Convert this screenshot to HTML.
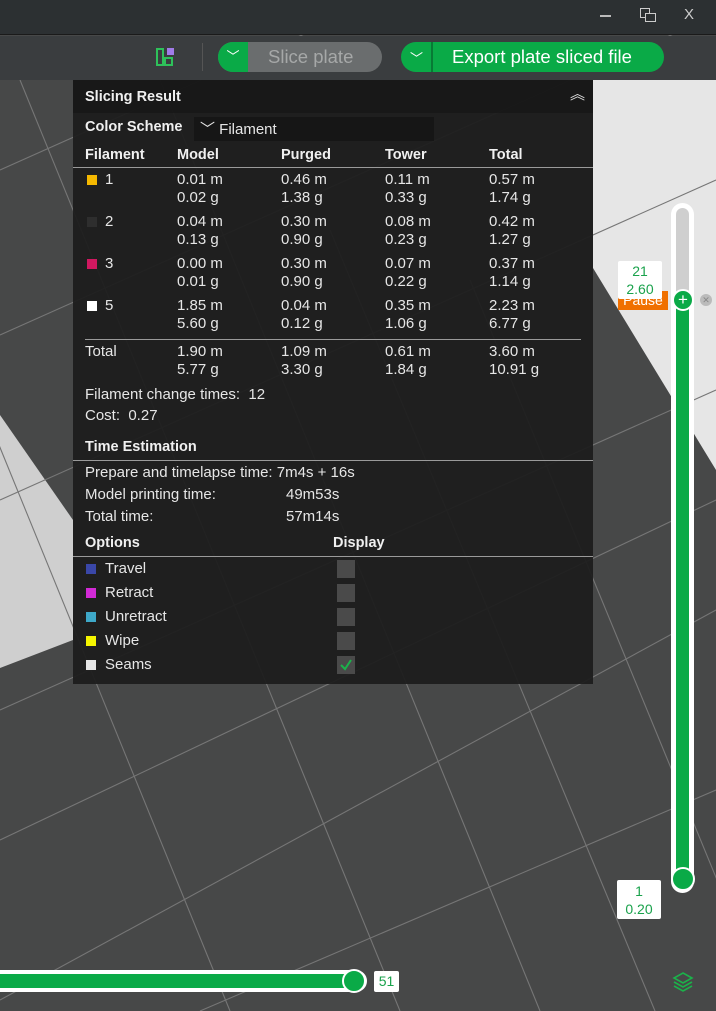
<!DOCTYPE html>
<html><head><meta charset="utf-8"><style>
*{margin:0;padding:0;box-sizing:border-box}
body{width:716px;height:1011px;overflow:hidden;background:#474848;font-family:"Liberation Sans","DejaVu Sans",sans-serif;position:relative}
.a{position:absolute;white-space:nowrap}
.t{color:#e6e6e6;font-size:15px;line-height:18px}
.b{font-weight:bold;color:#f0f0f0;font-size:14.5px}
.sw{position:absolute;width:10px;height:10px}
.cb{position:absolute;left:337px;width:18px;height:18px;background:#4a4a4a}
.ln{position:absolute;height:1px;background:#9a9a9a}
</style></head><body>
<svg class="a" style="left:0;top:0" width="716" height="1011">
<polygon points="593,80 716,80 716,470 593,268" fill="#e6e6e6"/>
<polygon points="0,415 73,520 73,640 0,668" fill="#cfcfcf"/>
<g stroke="#767676" stroke-width="1.1" fill="none">
<line x1="20" y1="80" x2="400" y2="1011"/>
<line x1="160" y1="80" x2="540" y2="1011"/>
<line x1="-150" y1="80" x2="230" y2="1011"/>
<line x1="330" y1="230" x2="655" y2="1011"/>
<line x1="470" y1="280" x2="750" y2="960"/>
<line x1="0" y1="170" x2="716" y2="-150"/>
<line x1="0" y1="335" x2="716" y2="15"/>
<line x1="0" y1="500" x2="716" y2="180"/>
<line x1="0" y1="710" x2="716" y2="390"/>
<line x1="0" y1="1000" x2="716" y2="610"/>
<line x1="200" y1="1011" x2="716" y2="790"/>
<line x1="0" y1="840" x2="716" y2="500"/>
</g>
</svg>
<div class="a" style="left:0;top:0;width:716px;height:35px;background:#2c3032;border-bottom:1px solid #1a1a1a"></div>
<div class="a" style="left:600px;top:15px;width:11px;height:1.5px;background:#bbb"></div>
<div class="a" style="left:640px;top:8px;width:10px;height:10px;border:1.5px solid #ccc"></div>
<div class="a" style="left:645px;top:13px;width:11px;height:9px;border:1.5px solid #ccc;background:#2c3032"></div>
<div class="a" style="left:684px;top:6px;color:#ccc;font-size:15px">X</div>
<div class="a" style="left:0;top:36px;width:716px;height:44px;background:#3a3d3f"></div>
<div class="a" style="left:156px;top:48px;width:8px;height:18px;border:2px solid #2ec15a"></div>
<div class="a" style="left:164px;top:57px;width:9px;height:9px;border:2px solid #2ec15a"></div>
<div class="a" style="left:167px;top:48px;width:7px;height:7px;background:#a07be8"></div>
<div class="a" style="left:202px;top:43px;width:1px;height:28px;background:#555"></div>
<div class="a" style="left:218px;top:42px;width:164px;height:30px;border-radius:15px;background:#6a6d6e"></div>
<div class="a" style="left:218px;top:42px;width:30px;height:30px;border-radius:15px 0 0 15px;background:#0aaa47;color:#fff;font-size:13px;text-align:center;line-height:30px">﹀</div>
<div class="a" style="left:268px;top:46px;color:#a6a8a8;font-size:18.5px">Slice plate</div>
<div class="a" style="left:401px;top:42px;width:263px;height:30px;border-radius:15px;background:#0aaa47"></div>
<div class="a" style="left:431px;top:42px;width:2px;height:30px;background:#087a35"></div>
<div class="a" style="left:410px;top:48px;color:#fff;font-size:13px">﹀</div>
<div class="a" style="left:452px;top:46px;color:#fff;font-size:18.5px">Export plate sliced file</div>

<div class="a" style="left:73px;top:80px;width:520px;height:604px;background:rgba(28,28,28,0.93)"></div>
<div class="a" style="left:73px;top:80px;width:520px;height:33px;background:rgba(20,20,20,0.6)"></div>
<div class="a t b" style="left:85px;top:88px">Slicing Result</div>
<div class="a t" style="left:570px;top:86px;font-size:15px">︽</div>
<div class="a t b" style="left:85px;top:118px">Color Scheme</div>
<div class="a" style="left:194px;top:117px;width:240px;height:24px;background:#161616"></div>
<div class="a t" style="left:200px;top:121px">﹀ Filament</div>
<div class="a t b" style="left:85px;top:146px">Filament</div>
<div class="a t b" style="left:177px;top:146px">Model</div>
<div class="a t b" style="left:281px;top:146px">Purged</div>
<div class="a t b" style="left:385px;top:146px">Tower</div>
<div class="a t b" style="left:489px;top:146px">Total</div>
<div class="ln" style="left:73px;top:167px;width:520px"></div>

<div class="sw" style="left:87px;top:175px;background:#f5b800"></div>
<div class="sw" style="left:87px;top:217px;background:#2e2e2e"></div>
<div class="sw" style="left:87px;top:259px;background:#d01860"></div>
<div class="sw" style="left:87px;top:301px;background:#fff"></div>
<div class="a t" style="left:105px;top:171px">1</div>
<div class="a t" style="left:105px;top:213px">2</div>
<div class="a t" style="left:105px;top:255px">3</div>
<div class="a t" style="left:105px;top:297px">5</div>

<div class="a t" style="left:177px;top:171px">0.01 m<br>0.02 g</div>
<div class="a t" style="left:281px;top:171px">0.46 m<br>1.38 g</div>
<div class="a t" style="left:385px;top:171px">0.11 m<br>0.33 g</div>
<div class="a t" style="left:489px;top:171px">0.57 m<br>1.74 g</div>
<div class="a t" style="left:177px;top:213px">0.04 m<br>0.13 g</div>
<div class="a t" style="left:281px;top:213px">0.30 m<br>0.90 g</div>
<div class="a t" style="left:385px;top:213px">0.08 m<br>0.23 g</div>
<div class="a t" style="left:489px;top:213px">0.42 m<br>1.27 g</div>
<div class="a t" style="left:177px;top:255px">0.00 m<br>0.01 g</div>
<div class="a t" style="left:281px;top:255px">0.30 m<br>0.90 g</div>
<div class="a t" style="left:385px;top:255px">0.07 m<br>0.22 g</div>
<div class="a t" style="left:489px;top:255px">0.37 m<br>1.14 g</div>
<div class="a t" style="left:177px;top:297px">1.85 m<br>5.60 g</div>
<div class="a t" style="left:281px;top:297px">0.04 m<br>0.12 g</div>
<div class="a t" style="left:385px;top:297px">0.35 m<br>1.06 g</div>
<div class="a t" style="left:489px;top:297px">2.23 m<br>6.77 g</div>
<div class="ln" style="left:85px;top:339px;width:496px"></div>
<div class="a t" style="left:85px;top:343px">Total</div>
<div class="a t" style="left:177px;top:343px">1.90 m<br>5.77 g</div>
<div class="a t" style="left:281px;top:343px">1.09 m<br>3.30 g</div>
<div class="a t" style="left:385px;top:343px">0.61 m<br>1.84 g</div>
<div class="a t" style="left:489px;top:343px">3.60 m<br>10.91 g</div>
<div class="a t" style="left:85px;top:386px">Filament change times:&nbsp; 12</div>
<div class="a t" style="left:85px;top:407px">Cost:&nbsp; 0.27</div>
<div class="a t b" style="left:85px;top:438px">Time Estimation</div>
<div class="ln" style="left:73px;top:460px;width:520px"></div>
<div class="a t" style="left:85px;top:464px">Prepare and timelapse time: 7m4s + 16s</div>
<div class="a t" style="left:85px;top:486px">Model printing time:</div>
<div class="a t" style="left:286px;top:486px">49m53s</div>
<div class="a t" style="left:85px;top:508px">Total time:</div>
<div class="a t" style="left:286px;top:508px">57m14s</div>
<div class="a t b" style="left:85px;top:534px">Options</div>
<div class="a t b" style="left:333px;top:534px">Display</div>
<div class="ln" style="left:73px;top:556px;width:520px"></div>
<div class="sw" style="left:86px;top:564px;background:#3a47a8"></div>
<div class="sw" style="left:86px;top:588px;background:#d22ad6"></div>
<div class="sw" style="left:86px;top:612px;background:#3ea8c8"></div>
<div class="sw" style="left:86px;top:636px;background:#f5f500"></div>
<div class="sw" style="left:86px;top:660px;background:#e6e6e6"></div>
<div class="a t" style="left:105px;top:560px">Travel</div>
<div class="a t" style="left:105px;top:584px">Retract</div>
<div class="a t" style="left:105px;top:608px">Unretract</div>
<div class="a t" style="left:105px;top:632px">Wipe</div>
<div class="a t" style="left:105px;top:656px">Seams</div>
<div class="cb" style="top:560px"></div>
<div class="cb" style="top:584px"></div>
<div class="cb" style="top:608px"></div>
<div class="cb" style="top:632px"></div>
<div class="cb" style="top:656px"></div>
<svg class="a" style="left:337px;top:656px" width="18" height="18"><path d="M4 9 L8 13 L14 4" stroke="#1bb24a" stroke-width="2" fill="none"/></svg>

<div class="a" style="left:671px;top:203px;width:23px;height:690px;border-radius:12px;background:#fff"></div>
<div class="a" style="left:676px;top:208px;width:13px;height:100px;border-radius:7px 7px 0 0;background:#cfcfcf"></div>
<div class="a" style="left:676px;top:300px;width:13px;height:580px;background:#0aaa47"></div>
<div class="a" style="left:671px;top:867px;width:24px;height:24px;border-radius:50%;background:#0aaa47;border:2px solid #fff"></div>
<div class="a" style="left:672px;top:289px;width:22px;height:22px;border-radius:50%;background:#0aaa47;border:2px solid #fff;color:#fff;text-align:center;font-size:17px;line-height:17px">+</div>
<div class="a" style="left:700px;top:294px;width:12px;height:12px;border-radius:50%;background:#bbb;color:#888;font-size:9px;line-height:12px;text-align:center">✕</div>
<div class="a" style="left:618px;top:291px;width:50px;height:19px;background:#f07000;color:#fff;font-size:14px;text-align:center;line-height:19px">Pause</div>
<div class="a" style="left:618px;top:261px;width:44px;height:38px;background:#fff;border-radius:2px;color:#1aa24c;font-size:14px;line-height:18px;text-align:center;padding-top:1px">21<br>2.60</div>
<div class="a" style="left:617px;top:880px;width:44px;height:39px;background:#fff;border-radius:2px;color:#1aa24c;font-size:14px;line-height:18px;text-align:center;padding-top:2px">1<br>0.20</div>

<div class="a" style="left:-10px;top:970px;width:377px;height:22px;border-radius:11px;background:#fff"></div>
<div class="a" style="left:0;top:974px;width:355px;height:14px;background:#0aaa47"></div>
<div class="a" style="left:342px;top:969px;width:24px;height:24px;border-radius:50%;background:#0aaa47;border:2px solid #fff"></div>
<div class="a" style="left:374px;top:971px;width:25px;height:21px;background:#fff;border-radius:2px;color:#1aa24c;font-size:14px;line-height:21px;text-align:center">51</div>

<svg class="a" style="left:671px;top:970px" width="24" height="24" fill="none" stroke="#1bb24a" stroke-width="1.6">
<path d="M12 3 L21 8 L12 13 L3 8 Z"/><path d="M3 12 L12 17 L21 12"/><path d="M3 16 L12 21 L21 16"/></svg>
</body></html>
